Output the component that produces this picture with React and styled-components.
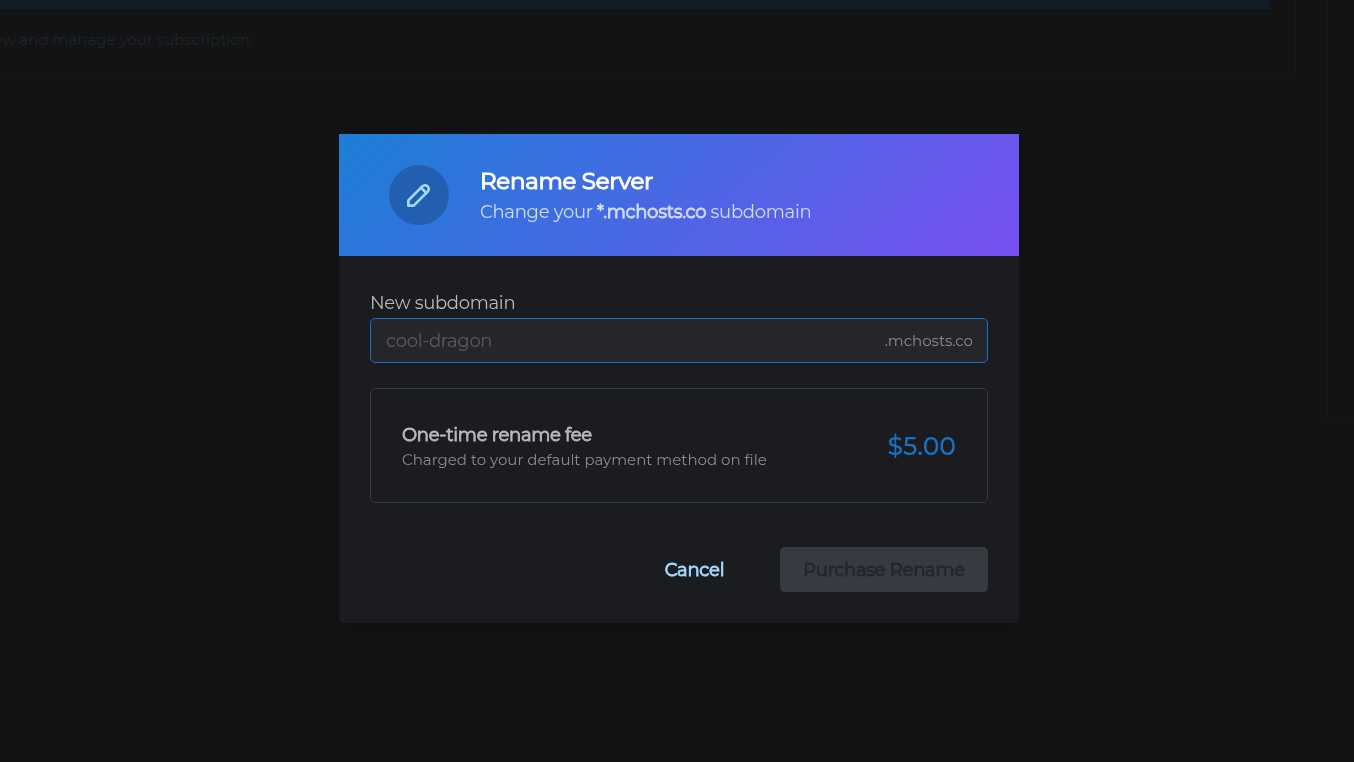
import { createGlobalStyle, css, styled } from 'styled-components';
import { TbPencil } from 'react-icons/tb';

export default function App() {
  return (
    <>
      <GlobalStyle />
      <Page>
        <BillingCard>
          <Banner />
          <BillingText>ew and manage your subscription.</BillingText>
        </BillingCard>
        <SideCard />
      </Page>
      <Overlay>
        <Modal>
          <Header>
            <IconCircle>
              <TbPencil size={32} />
            </IconCircle>
            <div>
              <Title>Rename Server</Title>
              <Subtitle>
                Change your <b>*.mchosts.co</b> subdomain
              </Subtitle>
            </div>
          </Header>
          <Body>
            <Label htmlFor="subdomain">New subdomain</Label>
            <Field>
              <Input id="subdomain" placeholder="cool-dragon" />
              <Suffix>.mchosts.co</Suffix>
            </Field>
            <FeeCard>
              <div>
                <FeeTitle>One-time rename fee</FeeTitle>
                <FeeNote>Charged to your default payment method on file</FeeNote>
              </div>
              <Price>$5.00</Price>
            </FeeCard>
            <Actions>
              <CancelButton>Cancel</CancelButton>
              <PurchaseButton disabled>Purchase Rename</PurchaseButton>
            </Actions>
          </Body>
        </Modal>
      </Overlay>
    </>
  );
}

const GlobalStyle = createGlobalStyle`
  * {
    box-sizing: border-box;
  }
  body {
    margin: 0;
    overflow: hidden;
    background-color: #111315;
    font-family: Montserrat, Inter, sans-serif;
  }
  button,
  input {
    font-family: inherit;
  }
`;

// thickens the regular weight without changing its widths
const heavy = css`
  font-weight: 400;
  -webkit-text-stroke: 0.85px currentColor;
`;

const Page = styled.div`
  display: flex;
  align-items: flex-start;
  gap: 31px;
  width: 1354px;
  height: 762px;
  overflow: hidden;
`;

const BillingCard = styled.div`
  flex: none;
  width: 1296px;
  height: 77px;
  border-right: 1px solid #151719;
  border-bottom: 1px solid #151719;
  border-bottom-right-radius: 5px;
`;

const Banner = styled.div`
  width: 1270px;
  height: 9px;
  background-color: #121d2a;
`;

const BillingText = styled.div`
  display: flex;
  justify-content: flex-end;
  width: 253px;
  margin-top: 21px;
  font-size: 15px;
  line-height: 20px;
  white-space: nowrap;
  color: #222426;
`;

const SideCard = styled.div`
  flex: 1;
  height: 424px;
  border-left: 1px solid #151719;
  border-bottom: 1px solid #151719;
  border-bottom-left-radius: 5px;
`;

const Overlay = styled.div`
  position: fixed;
  inset: 0;
  display: flex;
  align-items: flex-start;
  padding: 134px 0 0 339px;
`;

const Modal = styled.div`
  width: 680px;
  height: 489px;
  overflow: hidden;
  background-color: #1b1c1f;
  border-radius: 0 0 5px 5px;
  box-shadow: 0 1px 3px rgba(0, 0, 0, 0.05), 0 28px 23px -7px rgba(0, 0, 0, 0.08),
    0 12px 12px -7px rgba(0, 0, 0, 0.06);
`;

const Header = styled.div`
  display: flex;
  align-items: center;
  gap: 31px;
  height: 122px;
  padding: 0 50px;
  background: linear-gradient(135deg, #1c7ed6 0%, #7950f2 100%);
`;

const IconCircle = styled.div`
  display: flex;
  align-items: center;
  justify-content: center;
  width: 60px;
  height: 60px;
  border-radius: 50%;
  background-color: #235fb0;
  color: #a5d8ff;
`;

const Title = styled.div`
  ${heavy}
  padding-top: 2px;
  font-size: 23px;
  line-height: 31px;
  letter-spacing: -0.3px;
  color: #ffffff;
  -webkit-text-stroke-width: 1.1px;
`;

const Subtitle = styled.div`
  padding-top: 1px;
  font-size: 18px;
  line-height: 28px;
  letter-spacing: -0.28px;
  color: #d3dcfa;

  b {
    ${heavy}
  }
`;

const Body = styled.div`
  display: flex;
  flex-direction: column;
  padding: 32px 31px;
`;

const Label = styled.label`
  font-size: 18px;
  line-height: 30px;
  letter-spacing: -0.3px;
  color: #b8b9bb;
`;

const Field = styled.div`
  display: flex;
  align-items: center;
  height: 45px;
  padding: 0 14px 0 15px;
  background-color: #25262b;
  border: 1px solid #1971c2;
  border-radius: 5px;
`;

const Input = styled.input`
  flex: 1;
  min-width: 0;
  padding: 0;
  border: none;
  outline: none;
  background: none;
  font-size: 18px;
  letter-spacing: -0.3px;
  color: #c1c2c5;

  &::placeholder {
    color: #5a5b60;
    opacity: 1;
  }
`;

const Suffix = styled.span`
  font-size: 15px;
  color: #8a8b8f;
`;

const FeeCard = styled.div`
  display: flex;
  align-items: center;
  justify-content: space-between;
  height: 115px;
  margin-top: 25px;
  padding: 1px 31px 0;
  border: 1px solid #373a40;
  border-radius: 5px;
`;

const FeeTitle = styled.div`
  ${heavy}
  font-size: 18px;
  line-height: 28px;
  letter-spacing: -0.28px;
  color: #b8b9bb;
`;

const FeeNote = styled.div`
  font-size: 15px;
  line-height: 22px;
  color: #8a8b8f;
`;

const Price = styled.div`
  font-size: 25px;
  font-weight: 500;
  color: #1971c2;
`;

const Actions = styled.div`
  display: flex;
  justify-content: flex-end;
  gap: 32px;
  margin-top: 44px;
`;

const Button = styled.button`
  ${heavy}
  height: 45px;
  padding: 0;
  border: none;
  border-radius: 5px;
  font-size: 18px;
  letter-spacing: -0.28px;
`;

const CancelButton = styled(Button)`
  width: 107px;
  background: none;
  color: #a5d8ff;
`;

const PurchaseButton = styled(Button)`
  width: 208px;
  background-color: #373a40;
  color: #25262b;
`;
